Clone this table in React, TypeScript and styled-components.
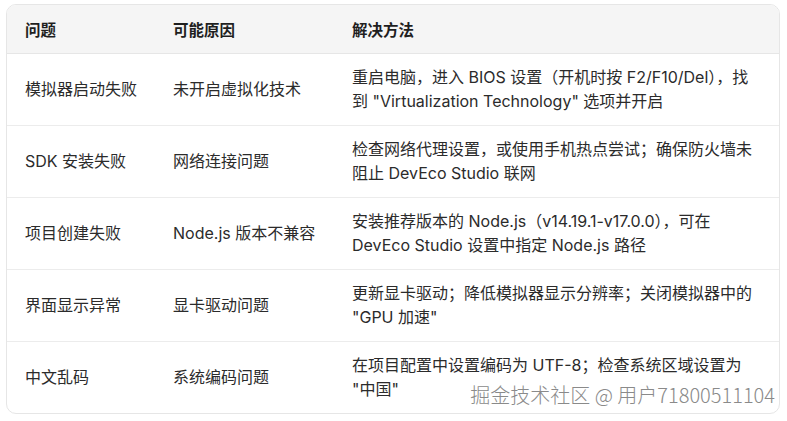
import React from "react";
import styled, { createGlobalStyle } from "styled-components";

const Global = createGlobalStyle`
  html, body { margin: 0; padding: 0; background: #ffffff; }
  body { font-family: Inter, "Noto Sans CJK SC", sans-serif; }
`;

const Page = styled.div`
  position: relative;
  padding: 4px 7px 0 6px;
  width: 787px;
  height: 421px;
  box-sizing: border-box;
`;

const Frame = styled.div`
  border: 1px solid #e6e6e6;
  border-radius: 10px;
  overflow: hidden;
`;

const Table = styled.table`
  width: 100%;
  border-collapse: collapse;
  table-layout: fixed;
  font-family: Inter, "Noto Sans CJK SC", sans-serif;
  font-size: 16px;
  color: #2b2b2b;
`;

const HeadCell = styled.th<{ $w?: number }>`
  width: ${(p) => (p.$w ? `${p.$w}px` : "auto")};
  height: 48px;
  padding: 0 18px 0 18px;
  text-align: left;
  font-weight: 600;
  font-size: 15.5px;
  color: #1f1f1f;
  background: #f5f5f5;
  border-bottom: 1px solid #e6e6e6;
  box-sizing: border-box;
`;

const Row = styled.tr`
  & + & td { border-top: 1px solid #ececec; }
`;

const Cell = styled.td`
  height: 72px;
  padding: 0 18px;
  line-height: 24px;
  vertical-align: middle;
  box-sizing: border-box;
`;

const Watermark = styled.div`
  position: absolute;
  right: 12px;
  bottom: 12px;
  font-family: "Noto Sans CJK SC", sans-serif;
  font-weight: 300;
  font-size: 20px;
  color: #8a8a8a;
  text-shadow: 1px 0 0 #fff, -1px 0 0 #fff, 0 1px 0 #fff, 0 -1px 0 #fff,
    1px 1px 0 #fff, -1px -1px 0 #fff, 1px -1px 0 #fff, -1px 1px 0 #fff;
  white-space: nowrap;
`;

const rows: [string, string, string][] = [
  [
    "模拟器启动失败",
    "未开启虚拟化技术",
    "重启电脑，进入 BIOS 设置（开机时按 F2/F10/Del），找到 \"Virtualization Technology\" 选项并开启",
  ],
  [
    "SDK 安装失败",
    "网络连接问题",
    "检查网络代理设置，或使用手机热点尝试；确保防火墙未阻止 DevEco Studio 联网",
  ],
  [
    "项目创建失败",
    "Node.js 版本不兼容",
    "安装推荐版本的 Node.js（v14.19.1-v17.0.0），可在 DevEco Studio 设置中指定 Node.js 路径",
  ],
  [
    "界面显示异常",
    "显卡驱动问题",
    "更新显卡驱动；降低模拟器显示分辨率；关闭模拟器中的 \"GPU 加速\"",
  ],
  [
    "中文乱码",
    "系统编码问题",
    "在项目配置中设置编码为 UTF-8；检查系统区域设置为 \"中国\"",
  ],
];

export default function App() {
  return (
    <>
      <Global />
      <Page>
        <Frame>
          <Table>
            <thead>
              <tr>
                <HeadCell $w={148}>问题</HeadCell>
                <HeadCell $w={179}>可能原因</HeadCell>
                <HeadCell>解决方法</HeadCell>
              </tr>
            </thead>
            <tbody>
              {rows.map((r) => (
                <Row key={r[0]}>
                  <Cell>{r[0]}</Cell>
                  <Cell>{r[1]}</Cell>
                  <Cell>{r[2]}</Cell>
                </Row>
              ))}
            </tbody>
          </Table>
        </Frame>
        <Watermark>掘金技术社区 @ 用户71800511104</Watermark>
      </Page>
    </>
  );
}
